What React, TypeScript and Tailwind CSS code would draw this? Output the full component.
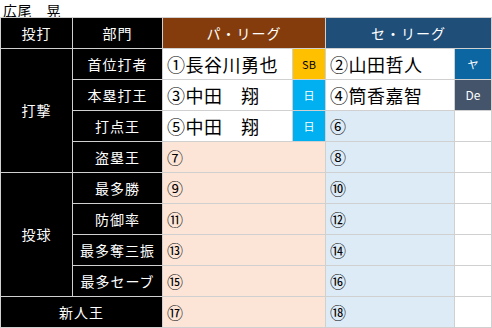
import React from "react";

const F = { fontFamily: '"Noto Sans CJK JP", "Noto Sans", sans-serif' };

const blk = "bg-black text-white flex items-center justify-center text-[14px] tracking-[1px]";
const name = "flex items-center pl-[4px] text-[18px] tracking-[0.5px] text-black";
const num = "flex items-center pl-[4px] text-[16px] text-black";

export default function App() {
  return (
    <div className="w-[492px] h-[328px] bg-white" style={F}>
      <div className="h-[17px] leading-[20px] pl-[3px] text-[14px] tracking-[0.5px] text-black whitespace-nowrap">広尾　晃</div>
      <div
        className="relative grid gap-px p-px bg-[#d0d0d0] w-[492px]"
        style={{ gridTemplateColumns: "71px 89px 129px 32px 128px 36px", gridTemplateRows: "30px repeat(9, 30px)" }}
      >
        <div className={blk}>投打</div>
        <div className={blk}>部門</div>
        <div className="col-span-2 bg-[#843C0C] text-white flex items-center justify-center text-[14px] tracking-[1px]">パ・リーグ</div>
        <div className="col-span-2 bg-[#1F4E79] text-white flex items-center justify-center text-[14px] tracking-[1px]">セ・リーグ</div>

        <div className={`${blk} row-span-4`}>打撃</div>
        <div className={blk}>首位打者</div>
        <div className={`${name} bg-white`}>①長谷川勇也</div>
        <div className="bg-[#FFC000] flex items-center justify-center text-[11px] text-black">SB</div>
        <div className={`${name} bg-white`}>②山田哲人</div>
        <div className="bg-[#0B66A2] flex items-center justify-center text-[11px] text-white">ヤ</div>

        <div className={blk}>本塁打王</div>
        <div className={`${name} bg-white`}>③中田　翔</div>
        <div className="bg-[#00B0F0] flex items-center justify-center text-[11px] text-white">日</div>
        <div className={`${name} bg-white`}>④筒香嘉智</div>
        <div className="bg-[#44546A] flex items-center justify-center text-[12px] text-white">De</div>

        <div className={blk}>打点王</div>
        <div className={`${name} bg-white`}>⑤中田　翔</div>
        <div className="bg-[#00B0F0] flex items-center justify-center text-[11px] text-white">日</div>
        <div className={`${num} bg-[#DDEBF7]`}>⑥</div>
        <div className="bg-white" />

        <div className={blk}>盗塁王</div>
        <div className={`${num} col-span-2 bg-[#FCE4D6]`}>⑦</div>
        <div className={`${num} bg-[#DDEBF7]`}>⑧</div>
        <div className="bg-white" />

        <div className={`${blk} row-span-4`}>投球</div>
        <div className={blk}>最多勝</div>
        <div className={`${num} col-span-2 bg-[#FCE4D6]`}>⑨</div>
        <div className={`${num} bg-[#DDEBF7]`}>⑩</div>
        <div className="bg-white" />

        <div className={blk}>防御率</div>
        <div className={`${num} col-span-2 bg-[#FCE4D6]`}>⑪</div>
        <div className={`${num} bg-[#DDEBF7]`}>⑫</div>
        <div className="bg-white" />

        <div className={blk}>最多奪三振</div>
        <div className={`${num} col-span-2 bg-[#FCE4D6]`}>⑬</div>
        <div className={`${num} bg-[#DDEBF7]`}>⑭</div>
        <div className="bg-white" />

        <div className={blk}>最多セーブ</div>
        <div className={`${num} col-span-2 bg-[#FCE4D6]`}>⑮</div>
        <div className={`${num} bg-[#DDEBF7]`}>⑯</div>
        <div className="bg-white" />

        <div className={`${blk} col-span-2`}>新人王</div>
        <div className={`${num} col-span-2 bg-[#FCE4D6]`}>⑰</div>
        <div className={`${num} bg-[#DDEBF7]`}>⑱</div>
        <div className="bg-white" />
      </div>
    </div>
  );
}
